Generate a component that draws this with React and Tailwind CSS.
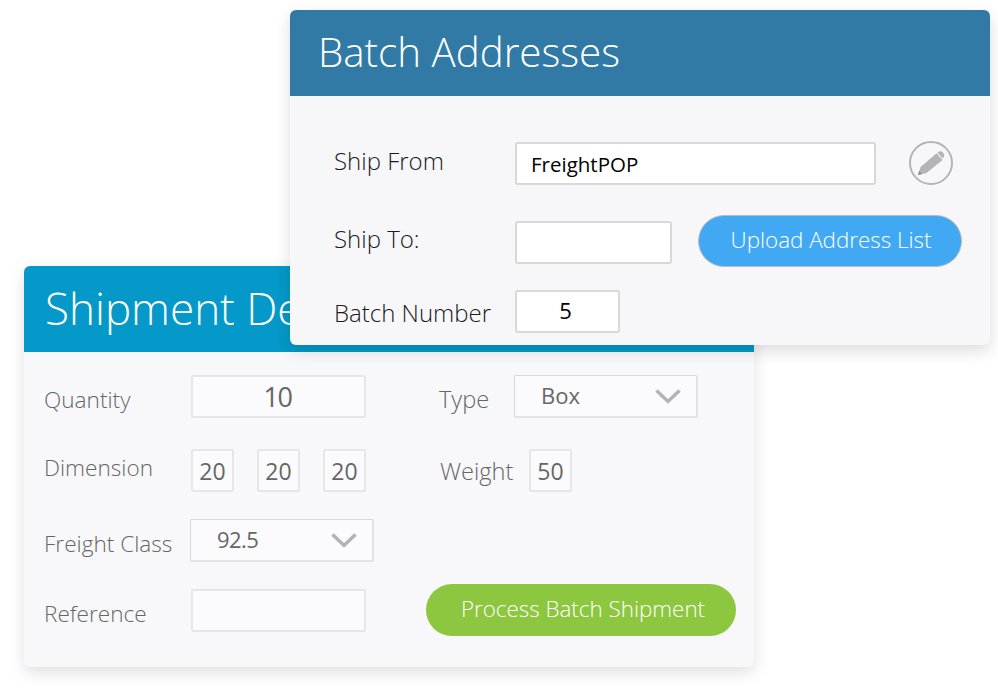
import React from 'react'

const font = { fontFamily: '"Open Sans", "Noto Sans", sans-serif' }

function Chevron() {
  return (
    <svg width="26" height="15" viewBox="0 0 26 15" fill="none" className="shrink-0">
      <path d="M1.5 1.5 L13 12.5 L24.5 1.5" stroke="#b3b3b3" strokeWidth="3.4" />
    </svg>
  )
}

function Pencil() {
  return (
    <svg width="28" height="26" viewBox="0 0 28 26" fill="none">
      <path d="M1 25 L3.5 17 L19.5 3.2 L25.5 10 L9.5 23 Z" fill="#b4b4b4" />
      <path d="M21 2 C22.5 0.8 24.5 0.8 26 2.4 C27.6 4.2 27.6 6 26.4 7.6 L25.6 8.4 L20.3 2.6 Z" fill="#b4b4b4" />
      <path d="M1 25 L2.2 21 L5 24 Z" fill="#8a8a8a" />
    </svg>
  )
}

function BackField({ className = '', value = '', textClass = 'text-[23px]' }) {
  return (
    <input
      readOnly
      value={value}
      className={`h-[43px] border-2 border-[#e6e6e8] bg-[#fbfbfd] rounded-[2px] text-center font-normal text-[#666] outline-none ${textClass} ${className}`}
    />
  )
}

function BackSelect({ value, className = '', textClass = '' }) {
  return (
    <div className={`h-[43px] flex items-center justify-between pl-[26px] pr-[15px] border border-[#d8d8dc] border-r-2 border-b-2 border-r-[#e3e3e6] border-b-[#e3e3e6] bg-[#fbfbfd] rounded-[2px] text-[22px] font-normal text-[#666] ${className}`}>
      <span className={`-mt-[1px] ${textClass}`}>{value}</span>
      <Chevron />
    </div>
  )
}

function FrontField({ className = '', value = '' }) {
  return (
    <input
      readOnly
      value={value}
      className={`h-[43px] border-2 border-[#d8d8d8] bg-white rounded-[3px] text-[20.5px] font-normal text-black outline-none ${className}`}
    />
  )
}

export default function App() {
  return (
    <div className="relative w-[998px] h-[690px] bg-white overflow-hidden font-light" style={font}>
      {/* Shipment Details card, sits behind */}
      <div className="absolute left-[24px] top-[266px] w-[730px] h-[401px] bg-[#f8f8fb] rounded-[6px] shadow-[0_6px_16px_rgba(0,0,0,0.12)] overflow-hidden">
        <div className="h-[86px] bg-[#0499c8] pl-[21px] pt-[12px] text-[44px] leading-[60px] text-white whitespace-nowrap">
          Shipment Details
        </div>
        <div className="flex pt-[23px] pl-[20px] text-[22.6px] text-[#666]">
          <div className="w-[395px] flex flex-col">
            <div className="flex items-center h-[43px]">
              <span className="w-[147px] mt-[6px]">Quantity</span>
              <BackField value="10" className="w-[175px] pr-[2px] tracking-tighter" textClass="text-[27px]" />
            </div>
            <div className="flex items-center h-[43px] mt-[31px]">
              <span className="w-[147px] -mt-[6px]">Dimension</span>
              <div className="flex gap-[23px]">
                <BackField value="20" className="w-[43px]" />
                <BackField value="20" className="w-[43px]" />
                <BackField value="20" className="w-[43px]" />
              </div>
            </div>
            <div className="flex items-center h-[43px] mt-[27px]">
              <span className="w-[146px] mt-[7px]">Freight Class</span>
              <BackSelect value="92.5" className="w-[184px]" textClass="tracking-tight" />
            </div>
            <div className="flex items-center h-[43px] mt-[27px]">
              <span className="w-[147px] mt-[6px]">Reference</span>
              <BackField className="w-[175px]" />
            </div>
          </div>
          <div className="flex flex-col items-start">
            <div className="flex items-center h-[43px]">
              <span className="w-[75px] mt-[7px] text-[23.6px]">Type</span>
              <BackSelect value="Box" className="w-[184px]" />
            </div>
            <div className="flex items-center h-[43px] mt-[31px]">
              <span className="w-[90px] pl-[1px] mt-[2px] text-[23.6px]">Weight</span>
              <BackField value="50" className="w-[43px]" />
            </div>
            <button className="w-[310px] h-[52px] mt-[92px] -ml-[13px] pl-[4px] pb-[2px] rounded-full bg-[#8dc73f] text-[22.4px] font-light text-white">
              Process Batch Shipment
            </button>
          </div>
        </div>
      </div>

      {/* Batch Addresses card, sits in front */}
      <div className="absolute left-[290px] top-[10px] w-[700px] h-[335px] bg-[#f7f7fa] rounded-[6px] shadow-[0_6px_16px_rgba(0,0,0,0.14)] overflow-hidden">
        <div className="h-[86px] bg-[#317aa6] pl-[28px] pt-[12px] text-[40.3px] leading-[60px] text-white whitespace-nowrap">
          Batch Addresses
        </div>
        <div className="flex flex-col pt-[46px] pl-[44px] text-[24px] font-light text-[#1a1a1a]">
          <div className="flex items-center h-[43px]">
            <span className="w-[181px] -mt-[5px]">Ship From</span>
            <FrontField value="FreightPOP" className="w-[361px] pl-[14px]" />
            <div className="ml-[33px] -mt-[2px] w-[44px] h-[44px] rounded-full border-2 border-[#b4b4b4] flex items-center justify-center">
              <Pencil />
            </div>
          </div>
          <div className="flex items-center h-[43px] mt-[36px]">
            <span className="w-[181px] -mt-[7px]">Ship To:</span>
            <FrontField className="w-[157px]" />
            <button className="ml-[26px] -mt-[3px] w-[264px] h-[52px] pl-[2px] pb-[3px] rounded-full bg-[#41a9f4] border border-[#b9bcbf] text-[22.4px] font-light text-white">
              Upload Address List
            </button>
          </div>
          <div className="flex items-center h-[43px] mt-[26px]">
            <span className="w-[181px] mt-[2px]">Batch Number</span>
            <FrontField value="5" className="w-[105px] pr-[4px] pb-[3px] text-center text-[22px]" />
          </div>
        </div>
      </div>
    </div>
  )
}
